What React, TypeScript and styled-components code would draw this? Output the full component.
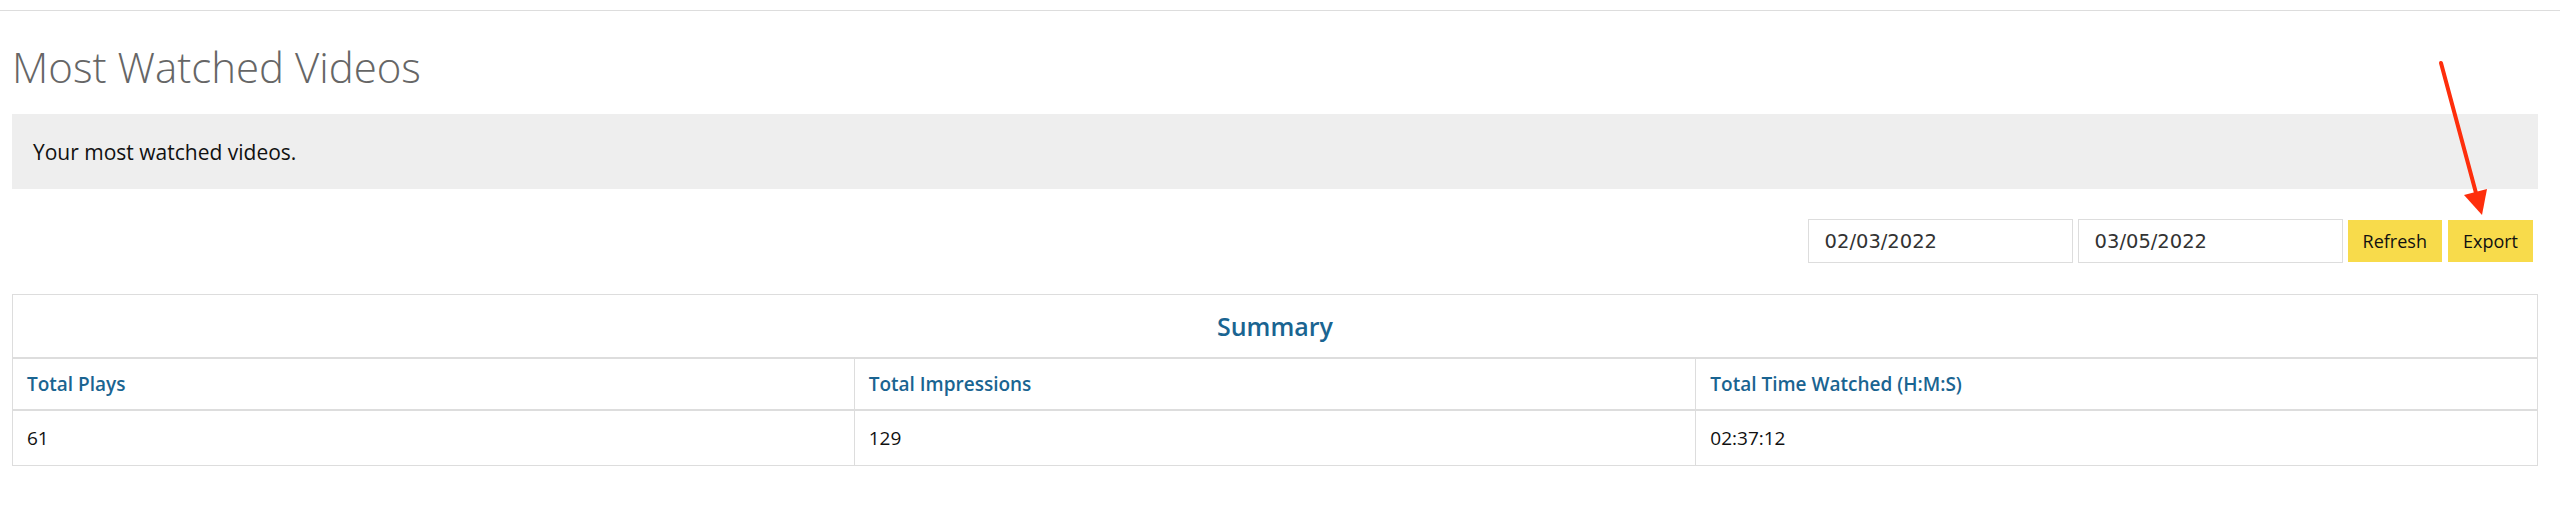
import styled, { createGlobalStyle } from "styled-components";

const GlobalStyle = createGlobalStyle`
    body {
        margin: 0;
        background: #ffffff;
        font-family: "Open Sans", "Liberation Sans", sans-serif;
        color: #111111;
    }
`;

const Page = styled.div`
    position: relative;
`;

const TopBar = styled.div`
    height: 10px;
    border-bottom: 1px solid #dddddd;
`;

const Content = styled.main`
    padding: 0 22px 40px 12px;
`;

const Title = styled.h1`
    margin: 31px 0 22px 0;
    font-size: 42px;
    line-height: 50px;
    font-weight: 300;
    color: #666666;
`;

const Well = styled.div`
    height: 75px;
    display: flex;
    align-items: center;
    padding: 0 21px;
    background: #eeeeee;
    font-size: 21px;
    color: #111111;
`;

const Toolbar = styled.div`
    margin-top: 30px;
    padding-right: 5px;
    display: flex;
    justify-content: flex-end;
    align-items: center;
    gap: 5px;
`;

const DateInput = styled.input`
    box-sizing: border-box;
    width: 265px;
    height: 44px;
    padding: 0 16px;
    border: 1px solid #dddddd;
    border-radius: 0;
    outline: none;
    font-family: "DejaVu Sans", Verdana, sans-serif;
    font-size: 19.5px;
    color: #333333;
    background: #ffffff;
`;

const Button = styled.button`
    height: 42px;
    padding: 0 15px;
    border: none;
    border-radius: 0;
    background: #f8db4b;
    font-family: "Open Sans", sans-serif;
    font-size: 18px;
    color: #111111;
    cursor: pointer;

    & + & {
        margin-left: 1px;
    }
`;

const SummaryTable = styled.table`
    width: 100%;
    margin-top: 31px;
    border-collapse: collapse;
    border: 1px solid #dddddd;
    table-layout: fixed;
`;

const Caption = styled.th`
    height: 62px;
    padding: 0;
    text-align: center;
    font-size: 25px;
    font-weight: 600;
    color: #1a6491;
    border-bottom: 2px solid #dddddd;
`;

const HeadCell = styled.th`
    height: 50px;
    padding: 0 14px;
    text-align: left;
    font-size: 19px;
    font-weight: 600;
    color: #1a6491;
    border-bottom: 2px solid #dddddd;
    border-left: 1px solid #dddddd;
`;

const Cell = styled.td`
    height: 54px;
    padding: 0 14px;
    font-size: 19px;
    color: #111111;
    border-left: 1px solid #dddddd;
`;

const Arrow = styled.svg`
    position: absolute;
    left: 2430px;
    top: 55px;
    width: 70px;
    height: 170px;
    overflow: visible;
`;

const columns = ["Total Plays", "Total Impressions", "Total Time Watched (H:M:S)"];
const values = ["61", "129", "02:37:12"];

export default function App() {
    return (
        <Page>
            <GlobalStyle />
            <TopBar />
            <Content>
                <Title>Most Watched Videos</Title>
                <Well>Your most watched videos.</Well>
                <Toolbar>
                    <DateInput defaultValue="02/03/2022" />
                    <DateInput defaultValue="03/05/2022" />
                    <Button>Refresh</Button>
                    <Button>Export</Button>
                </Toolbar>
                <SummaryTable>
                    <thead>
                        <tr>
                            <Caption colSpan={3}>Summary</Caption>
                        </tr>
                        <tr>
                            {columns.map((c) => (
                                <HeadCell key={c}>{c}</HeadCell>
                            ))}
                        </tr>
                    </thead>
                    <tbody>
                        <tr>
                            {values.map((v) => (
                                <Cell key={v}>{v}</Cell>
                            ))}
                        </tr>
                    </tbody>
                </SummaryTable>
            </Content>
            <Arrow viewBox="0 0 70 170">
                <line x1="11" y1="8" x2="46" y2="138" stroke="#fe2e0c" strokeWidth="4" strokeLinecap="round" />
                <polygon points="34,140 57,134 52,160" fill="#fe2e0c" />
            </Arrow>
        </Page>
    );
}
